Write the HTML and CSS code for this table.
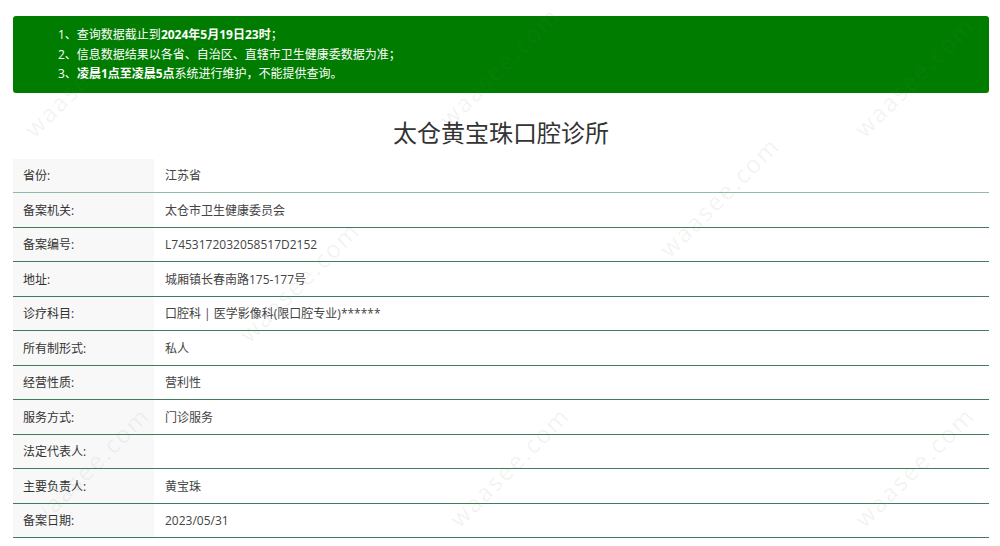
FILE: index.html
```html
<!DOCTYPE html>
<html lang="zh-CN">
<head>
<meta charset="utf-8">
<title>太仓黄宝珠口腔诊所</title>
<link rel="stylesheet" href="styles.css">
</head>
<body>
<div class="page">
  <div class="notice">
    <p>1、查询数据截止到<b>2024年5月19日23时</b>；</p>
    <p>2、信息数据结果以各省、自治区、直辖市卫生健康委数据为准；</p>
    <p>3、<b>凌晨1点至凌晨5点</b>系统进行维护，不能提供查询。</p>
  </div>
  <h1 class="title">太仓黄宝珠口腔诊所</h1>
  <div class="table">
    <div class="row first"><div class="label">省份:</div><div class="value">江苏省</div></div>
    <div class="row"><div class="label">备案机关:</div><div class="value">太仓市卫生健康委员会</div></div>
    <div class="row"><div class="label">备案编号:</div><div class="value">L7453172032058517D2152</div></div>
    <div class="row"><div class="label">地址:</div><div class="value">城厢镇长春南路175-177号</div></div>
    <div class="row"><div class="label">诊疗科目:</div><div class="value">口腔科 | 医学影像科(限口腔专业)******</div></div>
    <div class="row"><div class="label">所有制形式:</div><div class="value">私人</div></div>
    <div class="row"><div class="label">经营性质:</div><div class="value">营利性</div></div>
    <div class="row"><div class="label">服务方式:</div><div class="value">门诊服务</div></div>
    <div class="row"><div class="label">法定代表人:</div><div class="value"></div></div>
    <div class="row"><div class="label">主要负责人:</div><div class="value">黄宝珠</div></div>
    <div class="row"><div class="label">备案日期:</div><div class="value">2023/05/31</div></div>
  </div>
</div>
<div class="wm w1" aria-hidden="true">waasee.com</div>
<div class="wm w2" aria-hidden="true">waasee.com</div>
<div class="wm w3" aria-hidden="true">waasee.com</div>
<div class="wm w4" aria-hidden="true">waasee.com</div>
<div class="wm w5" aria-hidden="true">waasee.com</div>
<div class="wm w6" aria-hidden="true">waasee.com</div>
<div class="wm w7" aria-hidden="true">waasee.com</div>
<div class="wm w8" aria-hidden="true">waasee.com</div>
</body>
</html>
```
FILE: styles.css
```css
* { box-sizing: border-box; }
html, body {
  margin: 0;
  padding: 0;
  background: #fff;
  font-family: "Open Sans", "Noto Sans CJK SC", sans-serif;
  color: #333;
  overflow: hidden;
}
.page {
  padding: 16px 11px 0 13px;
}
.notice {
  background: #007d00;
  color: #fff;
  border-radius: 3px;
  padding: 9px 0 9px 45px;
  height: 77px;
  font-size: 12px;
  line-height: 19.5px;
}
.notice p { margin: 0; }
.notice b { font-weight: 700; }
.title {
  margin: 24px 0 9.5px;
  text-align: center;
  font-size: 24px;
  line-height: 32px;
  font-weight: 400;
  color: #333;
}
.table {
  display: flex;
  flex-direction: column;
  font-size: 12px;
}
.row {
  display: flex;
  height: 34.5px;
  border-bottom: 1px solid #3f7d5a;
}
.row.first { border-bottom-color: #8fbca2; }
.label {
  width: 141px;
  flex: none;
  background: #f8f8f8;
  padding-left: 10px;
  display: flex;
  align-items: center;
  color: #333;
}
.value {
  flex: 1;
  padding-left: 11px;
  display: flex;
  align-items: center;
  color: #444;
}
.wm {
  position: absolute;
  font-family: "Open Sans", sans-serif;
  font-size: 24px;
  letter-spacing: 2px;
  color: rgba(120, 120, 120, 0.09);
  transform: rotate(-45deg);
  white-space: nowrap;
  pointer-events: none;
}
.w1 { left: 5px; top: 60px; }
.w2 { left: 420px; top: 50px; }
.w3 { left: 835px; top: 60px; }
.w4 { left: 220px; top: 265px; }
.w5 { left: 640px; top: 180px; }
.w6 { left: 10px; top: 450px; }
.w7 { left: 430px; top: 450px; }
.w8 { left: 835px; top: 450px; }
```
